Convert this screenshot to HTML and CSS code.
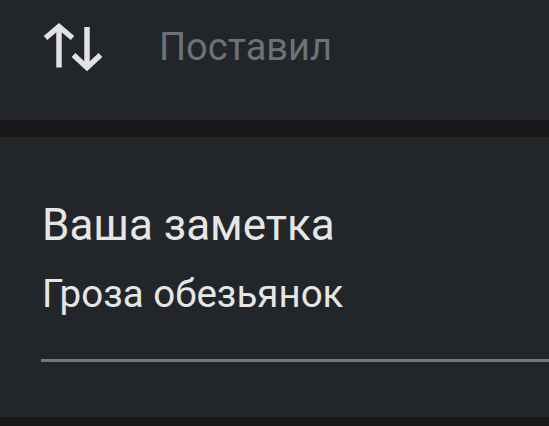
FILE: index.html
```html
<!DOCTYPE html>
<html lang="ru">
  <head>
    <meta charset="UTF-8" />
    <meta name="viewport" content="width=device-width, initial-scale=1.0" />
    <title>Ваша заметка</title>
    <link rel="stylesheet" href="styles.css">
  </head>
  <body>
    <!-- сортировка -->
    <div class="card sort-row">
      <svg class="sort-icon" width="66" height="56" viewBox="0 0 66 56">
        <g fill="none" stroke="#e2e2e2" stroke-width="5.5" stroke-linecap="butt" stroke-linejoin="miter">
          <path d="M19 9 V49.5" />
          <path d="M5.5 20 L19 8.5 L32.5 20" />
          <path d="M47 9 V50" />
          <path d="M33.5 37 L47 49.5 L60.5 37" />
        </g>
      </svg>
      <span class="sort-label">Поставил</span>
    </div>

    <!-- заметка -->
    <div class="card note">
      <h2 class="note-title">Ваша заметка</h2>
      <div class="note-text">Гроза обезьянок</div>
      <div class="note-line"></div>
    </div>
  </body>
</html>
```

FILE: styles.css
```css
body {
  margin: 0;
  padding: 0;
  background-color: #181818;
  font-family: Roboto, "Liberation Sans", sans-serif;
  display: flex;
  flex-direction: column;
  gap: 17px;
  overflow: hidden;
}

.card {
  background-color: #22262a;
}

.sort-row {
  height: 120px;
  display: flex;
  align-items: flex-start;
}
.sort-icon {
  display: block;
  margin: 18px 0 0 40px;
}
.sort-label {
  margin: 24px 0 0 53px;
  font-size: 38px;
  line-height: 46px;
  color: #6e7276;
}

.note {
  height: 280px;
  padding-left: 41px;
  display: flex;
  flex-direction: column;
}
.note-title {
  margin: 62px 0 0 1px;
  font-size: 44px;
  font-weight: 400;
  line-height: 52px;
  color: #e6e6e6;
}
.note-text {
  margin: 20px 0 0 1px;
  font-size: 38.5px;
  line-height: 46px;
  color: #e6e6e6;
}
.note-line {
  margin-top: 42px;
  height: 3px;
  background-color: #777777;
}
```
